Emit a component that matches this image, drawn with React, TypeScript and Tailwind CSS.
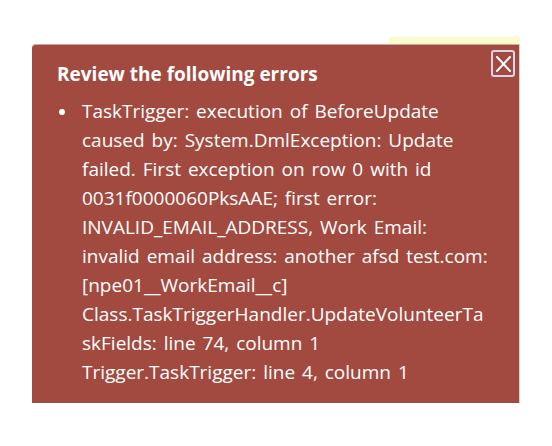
import React from "react";

const lines = [
  "TaskTrigger: execution of BeforeUpdate",
  "caused by: System.DmlException: Update",
  "failed. First exception on row 0 with id",
  "0031f0000060PksAAE; first error:",
  "INVALID_EMAIL_ADDRESS, Work Email:",
  "invalid email address: another afsd test.com:",
  "[npe01__WorkEmail__c]",
  "Class.TaskTriggerHandler.UpdateVolunteerTa",
  "skFields: line 74, column 1",
  "Trigger.TaskTrigger: line 4, column 1",
];

export default function App() {
  return (
    <div
      className="w-[552px] h-[446px] bg-white overflow-hidden"
      style={{ fontFamily: "'Open Sans', Lato, sans-serif" }}
    >
      <div className="ml-[32px] mt-[37px] w-[488px]">
        <div className="h-[7px] flex justify-end">
          <div className="w-[131px] h-full bg-[#fbfbcb]" />
        </div>
        <div className="relative bg-[#a34a40] rounded-tl-[4px] border-t border-[#cfa8a2] border-r border-r-[#d6d2d2] pl-[25px] pr-[20px] pt-[16px] pb-[16px]">
          <button className="absolute right-[4px] top-[5px] w-[24px] h-[27px] rounded-[3px] border-2 border-[#d9d6ea] flex items-center justify-center">
            <svg width="17" height="18" viewBox="0 0 17 18" fill="none">
              <path d="M2 2L15 16M15 2L2 16" stroke="white" strokeWidth="2" strokeLinecap="round" />
            </svg>
          </button>
          <h2 className="text-white font-bold text-[19px] leading-[26px]">
            Review the following errors
          </h2>
          <div className="mt-[10px] flex text-white text-[19px] leading-[29px] [word-spacing:2px]">
            <div className="w-[25px] shrink-0 flex justify-start pt-[12px] pl-[2px]">
              <span className="block w-[6px] h-[6px] rounded-full bg-white" />
            </div>
            <div className="whitespace-nowrap">
              {lines.map((l, i) => (
                <div key={i}>{l}</div>
              ))}
            </div>
          </div>
        </div>
      </div>
    </div>
  );
}
